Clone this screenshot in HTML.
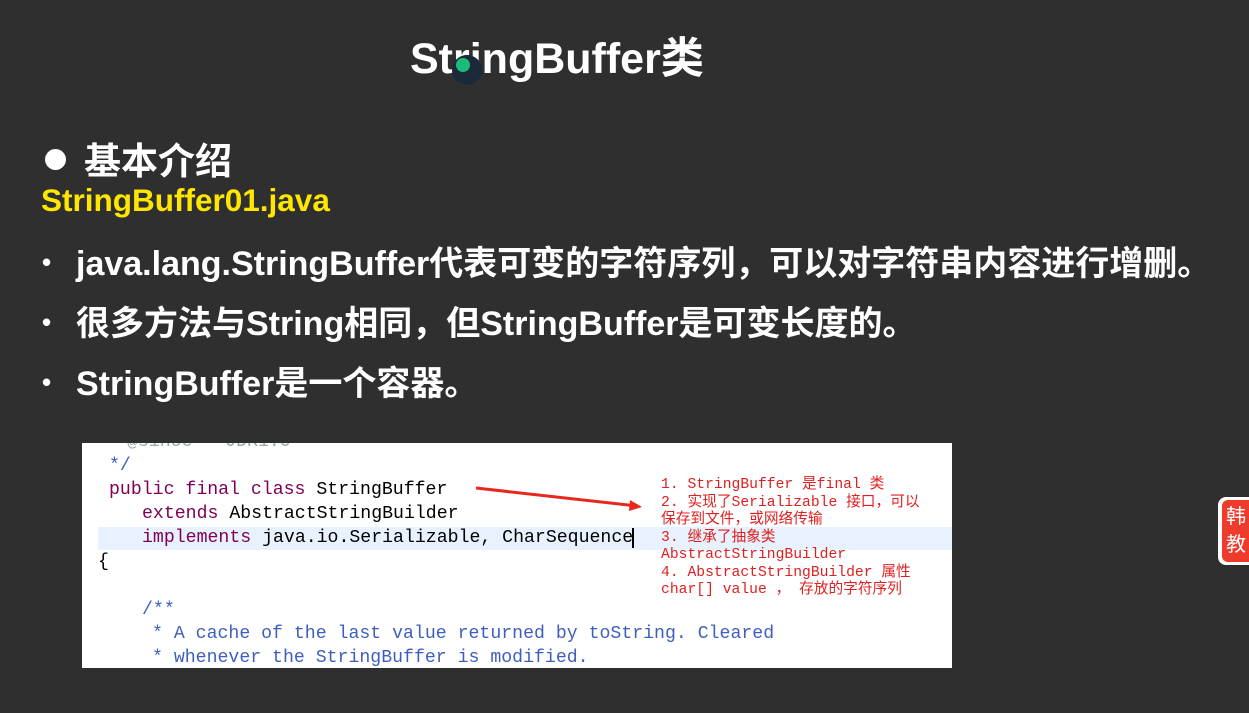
<!DOCTYPE html>
<html><head><meta charset="utf-8"><style>
body{margin:0;width:1249px;height:713px;background:#2f2f2f;overflow:hidden;position:relative;font-family:"Liberation Sans","Noto Sans CJK SC",sans-serif;color:#fff}
.a{position:absolute;white-space:nowrap}
.t{font-weight:bold}
.code{font-family:"Liberation Mono","Noto Sans CJK SC",monospace;font-size:18.2px;line-height:24px;color:#000}
.k{color:#7f0055}.c{color:#3f5fbf}
.r{font-family:"Liberation Mono","Noto Sans CJK SC",monospace;font-size:14.7px;line-height:17.5px;color:#e02020}
.b{position:absolute;left:42px;font-size:26px;font-weight:bold}
</style></head><body>
<div class="a t" style="left:410px;top:24px;font-size:43px;">StringBuffer类</div>
<div class="a" style="left:452px;top:55px;width:30px;height:30px;border-radius:50%;background:#1a2a3a"></div>
<div class="a" style="left:456px;top:58px;width:14px;height:14px;border-radius:50%;background:#1dbb7a"></div>
<div class="a" style="left:45px;top:149px;width:21px;height:21px;border-radius:50%;background:#fff"></div>
<div class="a t" style="left:84px;top:131px;font-size:37px;">基本介绍</div>
<div class="a t" style="left:41px;top:182px;font-size:31.5px;color:#ffe600">StringBuffer01.java</div>
<div class="b" style="top:247px">•</div>
<div class="b" style="top:307px">•</div>
<div class="b" style="top:367px">•</div>
<div class="a t" style="left:76px;top:236px;font-size:34px;">java.lang.StringBuffer代表可变的字符序列，可以对字符串内容进行增删。</div>
<div class="a t" style="left:76px;top:296px;font-size:34px;">很多方法与String相同，但StringBuffer是可变长度的。</div>
<div class="a t" style="left:76px;top:356px;font-size:34px;">StringBuffer是一个容器。</div>
<div class="a" style="left:82px;top:443px;width:870px;height:225px;background:#fff;overflow:hidden">
 <div class="a" style="left:16px;top:84px;width:854px;height:23px;background:#e8f2fe"></div>
 <div class="a code" style="left:45px;top:-13px;color:#9aa">@since&nbsp;&nbsp; JDK1.0</div>
 <div class="a code c" style="left:27px;top:11px">*/</div>
 <div class="a code" style="left:27px;top:35px"><span class="k">public final class</span> StringBuffer</div>
 <div class="a code" style="left:60px;top:59px"><span class="k">extends</span> AbstractStringBuilder</div>
 <div class="a code" style="left:60px;top:83px"><span class="k">implements</span> java.io.Serializable, CharSequence</div>
 <div class="a" style="left:550px;top:85px;width:2px;height:20px;background:#000"></div>
 <div class="a code" style="left:16px;top:107px">{</div>
 <div class="a code c" style="left:60px;top:155px">/**</div>
 <div class="a code c" style="left:70px;top:179px">* A cache of the last value returned by toString. Cleared</div>
 <div class="a code c" style="left:70px;top:203px">* whenever the StringBuffer is modified.</div>
 <svg class="a" style="left:390px;top:40px" width="180" height="30"><line x1="4" y1="5" x2="165" y2="23" stroke="#e8281e" stroke-width="3"/><polygon points="170,24 158,17 157,28" fill="#e8281e"/></svg>
 <div class="a r" style="left:579px;top:34px">1. StringBuffer 是final 类<br>2. 实现了Serializable 接口，可以<br>保存到文件，或网络传输<br>3. 继承了抽象类<br>AbstractStringBuilder<br>4. AbstractStringBuilder 属性<br>char[] value ， 存放的字符序列</div>
</div>
<div class="a" style="left:1218px;top:497px;width:40px;height:68px;border-radius:8px;background:#fff"></div>
<div class="a" style="left:1222px;top:500px;width:36px;height:62px;border-radius:6px;background:#ee3b2b;color:#fff;font-size:20px;line-height:28px;padding:3px 0 0 4px;box-sizing:border-box">韩<br>教</div>
</body></html>
